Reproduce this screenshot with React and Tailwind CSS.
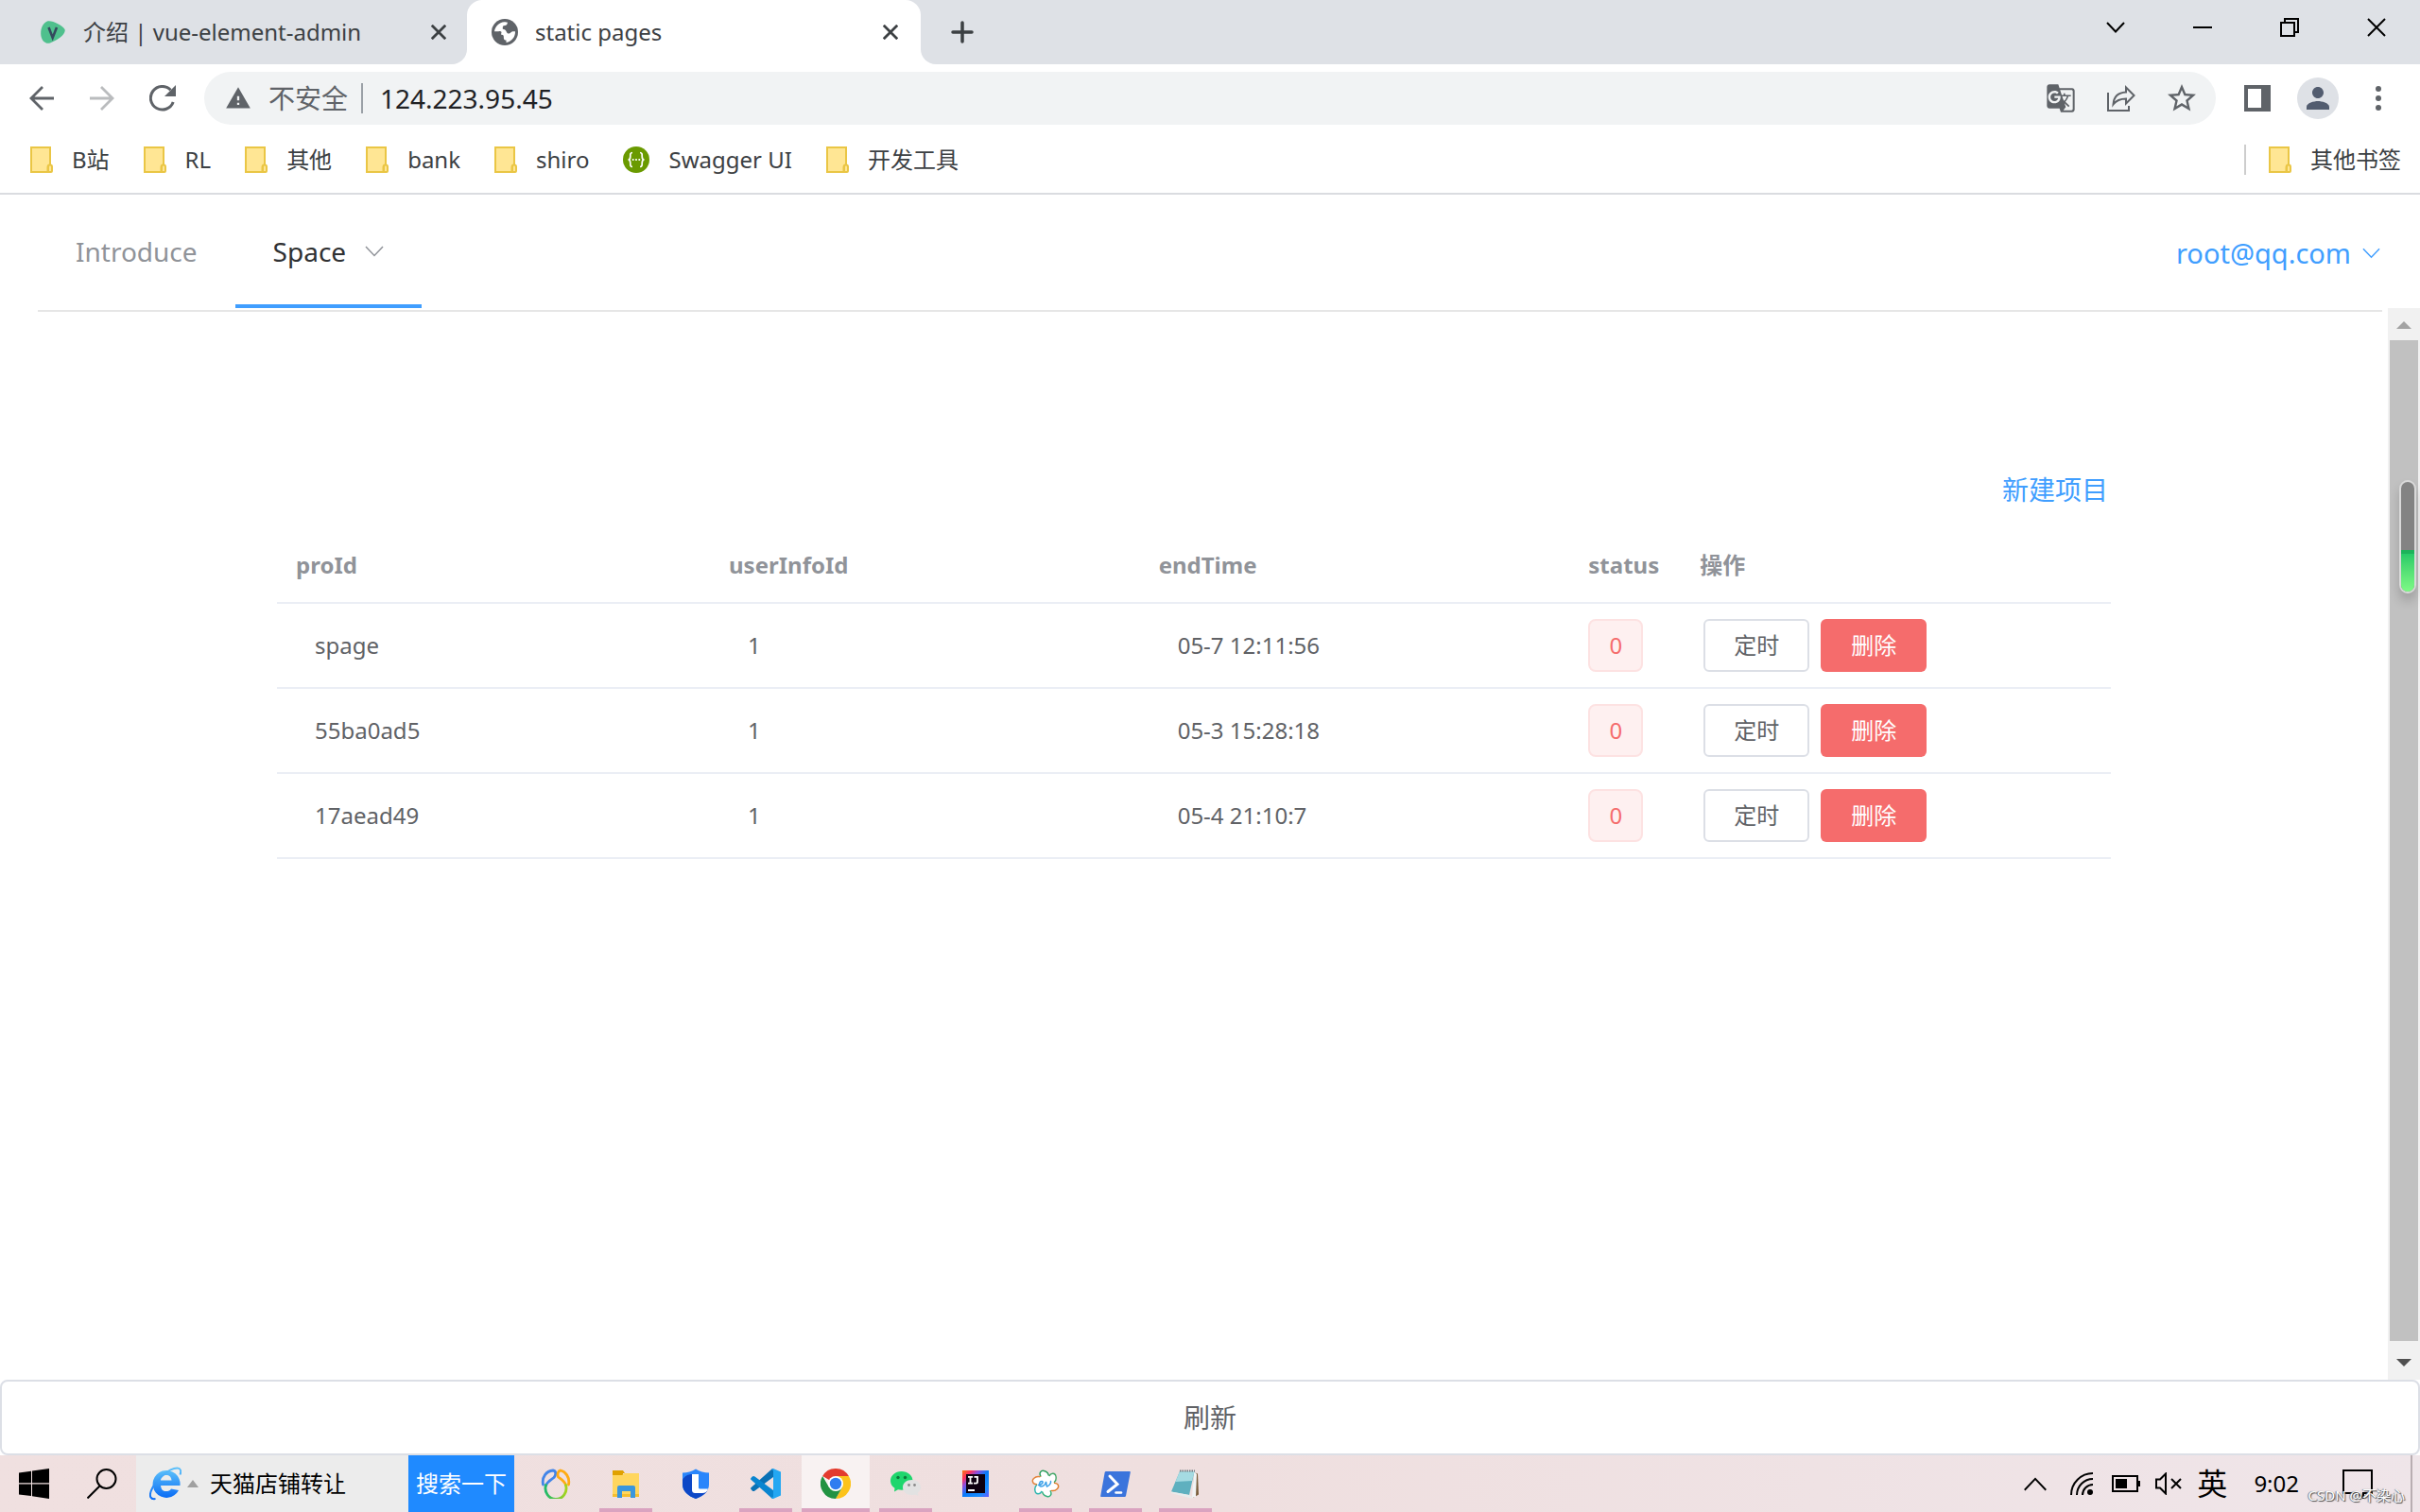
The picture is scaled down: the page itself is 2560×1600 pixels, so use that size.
import React from "react";
import {
  MdGTranslate,
  MdWarning,
  MdStarOutline,
  MdPerson,
} from "react-icons/md";

const rows = [
  { id: "spage", user: "1", end: "05-7 12:11:56", status: "0" },
  { id: "55ba0ad5", user: "1", end: "05-3 15:28:18", status: "0" },
  { id: "17aead49", user: "1", end: "05-4 21:10:7", status: "0" },
];

const bookmarks = ["B站", "RL", "其他", "bank", "shiro", "Swagger UI", "开发工具"];

function Chevron({ className, width = 2, up = false }) {
  return (
    <svg viewBox="0 0 20 12" className={className} fill="none" stroke="currentColor" strokeWidth={width} aria-hidden="true">
      <path d={up ? "M1 11 10 1.5 19 11" : "M1 1l9 9.5L19 1"} />
    </svg>
  );
}

function CloseX({ className, width }) {
  return (
    <svg viewBox="0 0 20 20" className={className} fill="none" stroke="currentColor" strokeWidth={width} aria-hidden="true">
      <path d="M1 1l18 18M19 1 1 19" />
    </svg>
  );
}

function Folder() {
  return (
    <svg viewBox="0 0 24 28" className="h-7 w-6 shrink-0" aria-hidden="true">
      <path d="M1 1h20v18.5a2.5 2.5 0 0 0-2.5 2.500V27H1z" fill="#ffe694" stroke="#eac645" strokeWidth="2" />
      <path d="M19 27v-5.500a2 2 0 0 1 4 0V26a1 1 0 0 1-1 1z" fill="#ffe694" stroke="#eac645" strokeWidth="2" />
    </svg>
  );
}

function Swagger() {
  return (
    <svg viewBox="0 0 28 28" className="size-7 shrink-0" aria-hidden="true">
      <circle cx="14" cy="14" r="14" fill="#6a9a00" />
      <path d="M10 6.500C7.500 6.500 7.800 8.500 7.800 10.500S7.300 14 5.500 14c1.800 0 2.300 1.500 2.300 3.500s-.3 4 2.200 4M18 6.500c2.500 0 2.200 2 2.200 4s.5 3.500 2.300 3.500c-1.800 0-2.300 1.500-2.300 3.500s.3 4-2.200 4" fill="none" stroke="#fff" strokeWidth="1.700" />
      <circle cx="10.700" cy="14" r="1.100" fill="#fff" />
      <circle cx="14" cy="14" r="1.100" fill="#fff" />
      <circle cx="17.300" cy="14" r="1.100" fill="#fff" />
    </svg>
  );
}

function TabStrip() {
  return (
    <div className="flex h-[68px] items-stretch bg-[#dee1e6] text-[#3c4043]">
      <div className="flex w-[494px] items-center pr-5 pl-[42px]">
        <svg viewBox="0 0 28 28" className="size-7 shrink-0" aria-hidden="true">
          <path d="M8 2.500C12 .8 24 6.500 26.500 11c2 5-8 12-15.500 14.500C6 27 1.500 23 1.200 16 1 9 4 4 8 2.500z" fill="#4fc08d" />
          <path d="M9.500 9l4.200 11L18 9" fill="none" stroke="#34495e" strokeWidth="2.600" />
        </svg>
        <span className="ml-[18px] flex-1 text-2xl whitespace-nowrap">介绍 | vue-element-admin</span>
        <button className="flex size-5 items-center justify-center" aria-label="关闭"><CloseX className="size-4" width="3.500" /></button>
      </div>
      <div className="relative flex w-[480px] items-center rounded-t-2xl bg-white pr-[22px] pl-[26px]">
        <span className="absolute bottom-0 -left-4 size-4 bg-white"><span className="block size-full rounded-br-2xl bg-[#dee1e6]" /></span>
        <span className="absolute -right-4 bottom-0 size-4 bg-white"><span className="block size-full rounded-bl-2xl bg-[#dee1e6]" /></span>
        <svg viewBox="0 0 28 28" className="size-7 shrink-0" aria-hidden="true">
          <circle cx="14" cy="14" r="14" fill="#5f6368" />
          <path d="M3 13.200C3.500 8.300 8 3.500 13.500 3.200c1 0 3 .2 3.300.5C17 5.500 15.800 6.800 14 7c-1.600 0-2.200.8-2.200 2.200v1.600c1.400.2 2.600.6 3.400 1.600.8 1.200.9 2.600 2.200 3 2.400.8 2.800-2 5-2.200H25c.3 5.500-3.600 10.800-9.500 11.700v-2.400c-3.500-.3-2.300-3-2.800-4.600-.3-1-1.400-1.100-2.500-1.200-.4-1.200.6-1.800.2-2.900-.5-1-2-.6-3-.6z" fill="#fff" />
        </svg>
        <span className="ml-[18px] flex-1 text-2xl whitespace-nowrap">static pages</span>
        <button className="flex size-5 items-center justify-center" aria-label="关闭"><CloseX className="size-4" width="3.500" /></button>
      </div>
      <button className="ml-8 flex w-6 items-center" aria-label="新标签页">
        <svg viewBox="0 0 24 24" className="size-6" stroke="currentColor" strokeWidth="3.500" strokeLinecap="round" aria-hidden="true"><path d="M12 2v20M2 12h20" /></svg>
      </button>
      <div className="ml-auto flex h-[58px] text-black">
        <button className="flex w-[92px] items-center justify-center" aria-label="搜索标签页"><Chevron className="h-3 w-5" /></button>
        <button className="flex w-[92px] items-center justify-center" aria-label="最小化"><span className="h-0.5 w-5 bg-black" /></button>
        <button className="flex w-[92px] items-center justify-center" aria-label="还原">
          <svg viewBox="0 0 20 20" className="size-5" fill="none" stroke="currentColor" strokeWidth="2" aria-hidden="true"><path d="M1 5h14v14H1zM5 5V1h14v14h-4" /></svg>
        </button>
        <button className="flex w-[92px] items-center justify-center" aria-label="关闭窗口"><CloseX className="size-5" width="2" /></button>
      </div>
    </div>
  );
}

const toolButton = "flex h-14 w-16 shrink-0 items-center justify-center";

function Toolbar() {
  return (
    <div className="flex items-center bg-white px-3 pt-2 text-[#5f6368]">
      <button className={toolButton} aria-label="后退">
        <svg viewBox="0 0 28 28" className="size-7" fill="none" stroke="currentColor" strokeWidth="2.800" aria-hidden="true"><path d="M27 14H3M15 2 3 14l12 12" /></svg>
      </button>
      <button className={toolButton + " text-[#babcbe]"} aria-label="前进">
        <svg viewBox="0 0 28 28" className="size-7" fill="none" stroke="currentColor" strokeWidth="2.800" aria-hidden="true"><path d="M1 14h24M13 2l12 12-12 12" /></svg>
      </button>
      <button className={toolButton} aria-label="重新加载">
        <svg viewBox="0 0 28 28" className="size-7" aria-hidden="true">
          <path d="M25.200 18A12.300 12.300 0 1 1 22.500 5.200" fill="none" stroke="currentColor" strokeWidth="3" />
          <path d="M28 0v12H16z" fill="currentColor" />
        </svg>
      </button>
      <div className="mx-3 flex h-14 flex-1 items-center rounded-full bg-[#f1f3f4] pr-1 pl-[22px]">
        <MdWarning className="size-7" />
        <span className="ml-[18px] text-[28px] leading-8">不安全</span>
        <span className="ml-[14px] h-8 w-0.5 bg-[#9aa0a6]" />
        <input aria-label="地址" defaultValue="124.223.95.45" className="ml-[18px] min-w-0 flex-1 bg-transparent text-[28px] text-[#202124] outline-none" />
        <button className={toolButton} aria-label="翻译"><MdGTranslate className="size-8" /></button>
        <button className={toolButton} aria-label="分享">
          <svg viewBox="0 0 30 28" className="h-7 w-[30px]" fill="none" stroke="currentColor" strokeWidth="2" aria-hidden="true">
            <path d="M1 8v19h22v-5" />
            <path d="M20 2.500v5C11 8 7 13 6.500 20.500 9.500 16.500 13 14.500 20 14.500v5L28.500 11z" strokeLinejoin="miter" />
          </svg>
        </button>
        <button className={toolButton} aria-label="收藏"><MdStarOutline className="size-9" /></button>
      </div>
      <button className={toolButton} aria-label="侧边栏"><span className="h-7 w-7 border-4 border-r-10 border-[#5f6368] bg-white" /></button>
      <button className={toolButton} aria-label="用户"><span className="flex size-11 items-center justify-center rounded-full bg-[#dee1e6] text-[#525c6f]"><MdPerson className="size-9" /></span></button>
      <button className={toolButton} aria-label="更多">
        <span className="flex flex-col gap-1"><i className="size-1.5 rounded-full bg-current" /><i className="size-1.5 rounded-full bg-current" /><i className="size-1.5 rounded-full bg-current" /></span>
      </button>
    </div>
  );
}

function Bookmarks() {
  return (
    <div className="flex h-[74px] items-center gap-9 border-b-2 border-[#dadce0] bg-white pt-0.5 pr-5 pl-8 text-2xl text-[#3c4043]">
      {bookmarks.map((name) => (
        <a key={name} href="#" className="flex items-center gap-5">
          {name === "Swagger UI" ? <Swagger /> : <Folder />}
          {name}
        </a>
      ))}
      <a href="#" className="ml-auto flex items-center gap-5">
        <span className="mr-1 h-8 w-0.5 bg-[#cdcdcd]" />
        <Folder />
        其他书签
      </a>
    </div>
  );
}

function AppHeader() {
  return (
    <header className="h-[120px]">
      <nav className="mx-10 flex h-[124px] justify-between border-b-2 border-[#e6e6e6] text-[28px]">
        <div className="flex h-[120px]">
          <a href="#" className="flex items-center border-b-4 border-transparent px-10 pt-1 text-[#909399]">Introduce</a>
          <a href="#" className="flex items-center gap-5 border-b-4 border-[#409eff] px-10 pt-1 text-[#303133]">
            Space
            <Chevron className="h-3 w-5 text-[#909399]" width="1.500" />
          </a>
        </div>
        <button className="flex h-[124px] items-center gap-3 pr-0.5 text-[29px] text-[#409eff]">
          root@qq.com
          <Chevron className="h-3 w-[19px]" width="1.500" />
        </button>
      </nav>
    </header>
  );
}

function ProjectTable() {
  return (
    <table className="w-full table-fixed text-left text-2xl text-[#606266]">
      <colgroup>
        <col className="w-[458px]" /><col /><col /><col className="w-[118px]" /><col />
      </colgroup>
      <thead>
        <tr className="h-20 border-b-2 border-[#ebeef5] text-[#909399]">
          {["proId", "userInfoId", "endTime", "status", "操作"].map((h) => (
            <th key={h} scope="col" className="pl-5 font-bold">{h}</th>
          ))}
        </tr>
      </thead>
      <tbody>
        {rows.map((r) => (
          <tr key={r.id} className="h-[90px] border-b-2 border-[#ebeef5]">
            <td className="pl-10">{r.id}</td>
            <td className="pl-10">{r.user}</td>
            <td className="pl-10">{r.end}</td>
            <td className="pl-5">
              <span className="flex h-14 w-[58px] items-center justify-center rounded-lg border-2 border-[#fde2e2] bg-[#fef0f0] text-[#f56c6c]">{r.status}</span>
            </td>
            <td className="pl-6">
              <div className="flex gap-3">
                <button className="h-14 w-28 rounded-md border-2 border-[#dcdfe6] bg-white">定时</button>
                <button className="h-14 w-28 rounded-md bg-[#f56c6c] text-white">删除</button>
              </div>
            </td>
          </tr>
        ))}
      </tbody>
    </table>
  );
}

function Scrollbar() {
  return (
    <div className="relative flex w-[34px] shrink-0 flex-col items-center bg-[#f1f1f1]">
      <button className="flex h-[34px] items-center justify-center" aria-label="向上滚动">
        <svg viewBox="0 0 16 8" className="mt-0.5 h-2 w-4" aria-hidden="true"><path d="M8 0l8 8H0z" fill="#a3a3a3" /></svg>
      </button>
      <div className="w-[30px] flex-1 bg-[#c1c1c1]" />
      <button className="flex h-[41px] items-center justify-center" aria-label="向下滚动">
        <svg viewBox="0 0 16 8" className="mt-1 h-2 w-4" aria-hidden="true"><path d="M0 0h16L8 8z" fill="#505050" /></svg>
      </button>
      <div className="absolute top-[182px] right-1 flex h-[120px] w-[18px] flex-col overflow-hidden rounded-full border-2 border-[#d9d9d9] bg-[#838383] shadow-[0_8px_12px_rgba(0,0,0,0.18)]">
        <div className="mt-auto h-11 border-t-4 border-[#1db35a] bg-linear-to-b from-[#26cb68] to-[#7dfa86]" />
      </div>
    </div>
  );
}

function Explorer() {
  return (
    <svg viewBox="0 0 32 32" className="size-8" aria-hidden="true">
      <path d="M2 2h11l2 3h-2v4H2z" fill="#e0a100" />
      <path d="M2 7h10l3-2h15v25H2z" fill="#ffd65e" />
      <path d="M2 27h28v3H2z" fill="#f6bf2f" />
      <path d="M7 31V20q0-2 2-2h15q2 0 2 2v11h-5v-7h-9v7z" fill="#3a96dd" />
    </svg>
  );
}

function Swirl() {
  return (
    <svg viewBox="0 0 32 32" className="size-8" fill="none" strokeWidth="2.800" strokeLinecap="round" aria-hidden="true">
      <defs>
        <linearGradient id="sw1" x1="0" y1="0" x2="1" y2="0"><stop offset="0" stopColor="#1fb96b" /><stop offset="1" stopColor="#a5d41d" /></linearGradient>
      </defs>
      <path d="M2.500 17C1 9 6 2.500 13 2c3.500.5 3.500 4.500 1 7.500C11 12 7 13.500 5.500 18" stroke="#4285e8" />
      <path d="M29.500 17C31 9 26 3 21 2c-3 .5-3.500 4-2.500 7 2.500 2 7 4.500 8 8.500" stroke="#ffab12" />
      <path d="M5.500 17.500A11 11.500 0 1 0 26.500 17.500" stroke="url(#sw1)" />
    </svg>
  );
}

function Shield() {
  return (
    <svg viewBox="0 0 32 32" className="size-8" aria-hidden="true">
      <path d="M16 .5C20 3 25 4.500 30 4.500V17c0 7-6 12-14 15C8 29 2 24 2 17V4.500C7 4.500 12 3 16 .5z" fill="#2a86fb" />
      <path d="M2 12c2-4 6-6 10-6v16c0 3 3 3 16 2-3 4-7 6.300-12 8C8 29 2 24 2 17z" fill="#0d47c6" />
      <path d="M12 6h7v13c0 2 0 2.500 2 2.500h8c-1 3-3 4.500-6 4.500h-7c-3 0-4-1-4-4z" fill="#fff" />
    </svg>
  );
}

function VsCode() {
  return (
    <svg viewBox="0 0 32 32" className="size-8" aria-hidden="true">
      <path d="M24 0v9L4.500 23.500Q3 24.500 1.800 23.500L.5 22Q-.5 21 .7 20L22.500.5z" fill="#0a71b5" />
      <path d="M24 32v-9L4.500 8.500Q3 7.500 1.800 8.500L.5 10Q-.5 11 .7 12L22.500 31.500z" fill="#0a85d0" />
      <path d="M24 0l8 3.500v25L24 32q-1 0-2-1l2-1V2l-2-1q1-1 2-1z" fill="#24a7f2" />
    </svg>
  );
}

function Chrome() {
  return (
    <svg viewBox="0 0 32 32" className="size-8" aria-hidden="true">
      <path d="M16 16 2.140 8A16 16 0 0 1 29.860 8z" fill="#e33b2e" />
      <path d="M16 8h13.860A16 16 0 0 1 16 32l6.930-12z" fill="#fcc31b" />
      <path d="M2.140 8A16 16 0 0 0 16 32l6.930-12L16 16l-6.930 4z" fill="#229342" />
      <circle cx="16" cy="16" r="8" fill="#fff" />
      <circle cx="16" cy="16" r="6.200" fill="#2f7df0" />
    </svg>
  );
}

function WeChat() {
  return (
    <svg viewBox="0 0 32 32" className="size-8" aria-hidden="true">
      <path d="M11.500 3C5 3 0 7.500 0 13c0 3.300 1.700 6 4.500 7.800L4 24.500l4-2.200c8 2 15.500-2.500 15.500-9.300C23.500 7.500 18.500 3 11.500 3z" fill="#1fd66d" />
      <circle cx="8" cy="9.500" r="1.700" fill="#0b7a3a" /><circle cx="15.500" cy="9.500" r="1.700" fill="#0b7a3a" />
      <path d="M22.500 12c-5.500 0-9.500 3.500-9.500 8s4 8 9.500 8c1.500 0 2.500-.2 3.700-.6l3.300 1.600-.7-3.200c2-1.500 3.200-3.500 3.200-5.800 0-4.500-4-8-9.500-8z" fill="#e2e2e2" />
      <circle cx="19.500" cy="17.500" r="1.400" fill="#8a8a8a" /><circle cx="25.500" cy="17.500" r="1.400" fill="#8a8a8a" />
    </svg>
  );
}

function Intellij() {
  return (
    <span className="flex size-7 items-center justify-center bg-[linear-gradient(135deg,#f97a12_0%,#fe315d_18%,#8a4fe0_32%,#087cfa_50%,#1a8dff_80%,#6b57ff_100%)]">
      <svg viewBox="0 0 20 20" className="size-5" aria-hidden="true">
        <rect width="20" height="20" fill="#0d0010" />
        <path d="M2 2.900h5M2 9.600h5M4.500 2.900v6.700M8.500 2.900h3.500V8q0 1.600-1.600 1.600H8" fill="none" stroke="#fff" strokeWidth="1.800" />
        <path d="M2 17h7" stroke="#fff" strokeWidth="2" />
      </svg>
    </span>
  );
}

const petals = [
  { a: 0, c: "#2a9d5c" }, { a: 60, c: "#45a86a" }, { a: 120, c: "#e07b2b" },
  { a: 180, c: "#36b37e" }, { a: 240, c: "#2fb6b0" }, { a: 300, c: "#e3823a" },
];

function Ev() {
  return (
    <svg viewBox="0 0 32 32" className="size-8" aria-hidden="true">
      {petals.map((p) => (
        <path key={p.a} d="M11 8.500C8.500 4.500 11.500 1.500 14.500 2.500 18 3.500 19.500 6 19.500 9" fill="#fff" stroke={p.c} strokeWidth="1.400" strokeLinecap="round" transform={`rotate(${p.a} 16 16)`} />
      ))}
      <circle cx="16" cy="16" r="9" fill="#fff" />
      <path d="M8.500 17.500c4 0 6-4 3.500-4s-4 5.500-.5 5.500c2.500 0 4.500-2.500 5-5 .5 2 .5 4 1 5 3-1 4.500-4 4-5.500" fill="none" stroke="#3aa0e8" strokeWidth="1.500" strokeLinecap="round" />
    </svg>
  );
}

function PowerShell() {
  return (
    <svg viewBox="0 0 32 32" className="size-8" aria-hidden="true">
      <path d="M6 4h25q1 0 .8 1L27 30q-.3 1-1.300 1H1q-1 0-.8-1L4.700 5Q5 4 6 4z" transform="translate(0 -1)" fill="#3b74dc" />
      <path d="M10 8l8 8.500L8 24.500" fill="none" stroke="#fff" strokeWidth="3" strokeLinecap="round" />
      <path d="M16.500 25.500H22" stroke="#fff" strokeWidth="2.600" strokeLinecap="round" />
    </svg>
  );
}

function Notepad() {
  return (
    <svg viewBox="0 0 32 32" className="size-8" aria-hidden="true">
      <path d="M25 4l4 1.500 1 22-6 3.500z" fill="#7a5e3c" />
      <path d="M25 3l3 3-1 24-4 1z" fill="#f2f4f5" />
      <path d="M10 3h15.500L20 28 1 24.500z" fill="#5fb0bf" />
      <path d="M10 3h15.500L23 13 5.500 14z" fill="#a5dbe2" />
      <path d="M1 24.500L20 28l4 3-2 .5L1 26z" fill="#e8ecec" />
      <path d="M10 2.500h16" stroke="#6f7b80" strokeWidth="2" strokeDasharray="1.500 1" />
    </svg>
  );
}

const apps = [
  { name: "桌面助手", icon: Swirl, bar: false },
  { name: "文件资源管理器", icon: Explorer, bar: true },
  { name: "联想电脑管家", icon: Shield, bar: false },
  { name: "Visual Studio Code", icon: VsCode, bar: true },
  { name: "Chrome", icon: Chrome, bar: true, active: true },
  { name: "微信", icon: WeChat, bar: true },
  { name: "IntelliJ IDEA", icon: Intellij, bar: false },
  { name: "EV", icon: Ev, bar: true },
  { name: "PowerShell", icon: PowerShell, bar: true },
  { name: "记事本", icon: Notepad, bar: true },
];

function Taskbar() {
  return (
    <footer className="relative flex h-[60px] shrink-0 items-stretch bg-linear-to-r from-[#f0e0e0] via-[#efdfdf] to-[#efe5e9] text-black">
      <button className="flex w-[72px] items-center justify-center" aria-label="开始">
        <svg viewBox="0 0 32 32" className="size-8" aria-hidden="true"><path d="M0 4.500l13-1.800v12.600H0zM14 2.500 32 0v15.300H14zM0 16.500h13v12.600L0 27.500zM14 16.500h18V32l-18-2.700z" /></svg>
      </button>
      <button className="flex w-[72px] items-center justify-center" aria-label="搜索">
        <svg viewBox="0 0 32 32" className="size-8" fill="none" stroke="currentColor" strokeWidth="2" aria-hidden="true"><circle cx="20.500" cy="11" r="10" /><path d="M13.500 18.500.5 31.500" /></svg>
      </button>
      <div className="flex w-[288px] items-center bg-[#ececec] pl-3.5">
        <svg viewBox="0 0 34 36" className="h-9 w-[34px] shrink-0" aria-hidden="true">
          <defs><linearGradient id="ie" x1="0" y1="0" x2="0" y2="1"><stop offset="0" stopColor="#5cc0fa" /><stop offset="1" stopColor="#0a6cf5" /></linearGradient></defs>
          <path d="M31 25A14.500 14.500 0 1 1 32.500 20H12c.5 4.500 2.500 6 5.500 6 2.500 0 4.500-.5 5.500-2.500zM12 14.500h11.500c-.5-4-2.500-5.500-5.500-5.500s-5.500 1.500-6 5.500z" fill="url(#ie)" fillRule="evenodd" />
          <path d="M32.500 8.500c1.500-4 .5-7-3-7-4 0-10 3-15 7.500C5 17-1 28 1.500 32.500c1 2 3 1.800 5 1.500" fill="none" stroke="url(#ie)" strokeWidth="2" />
        </svg>
        <svg viewBox="0 0 12 8" className="mr-3 ml-1.5 h-2 w-3 shrink-0" aria-hidden="true"><path d="M6 0l6 8H0z" fill="#a0a0a0" /></svg>
        <input aria-label="搜索内容" defaultValue="天猫店铺转让" className="min-w-0 flex-1 bg-transparent text-2xl outline-none" />
      </div>
      <button className="mr-[7px] w-28 bg-[#1f8aff] text-2xl whitespace-nowrap text-white">搜索一下</button>
      {apps.map(({ name, icon: Icon, bar, active }) => (
        <button key={name} aria-label={name} className={active ? "relative mx-px flex w-[72px] items-center justify-center bg-[#f8f2f2]" : "relative mx-[9px] flex w-14 items-center justify-center"}>
          <Icon />
          {bar && <span className="absolute inset-x-0 bottom-0 h-1 bg-[#daa3c0]" />}
        </button>
      ))}
      <div className="ml-auto flex items-center">
        <Chevron up className="h-[15px] w-[26px]" width="1.500" />
        <svg viewBox="0 0 24 24" className="ml-6 size-6" fill="none" stroke="currentColor" strokeWidth="2" aria-hidden="true">
          <path d="M1 24A23 23 0 0 1 24 1M7 24A17 17 0 0 1 24 7M13 24a11 11 0 0 1 11-11" /><circle cx="21" cy="21" r="3" fill="currentColor" stroke="none" />
        </svg>
        <svg viewBox="0 0 30 18" className="ml-5 h-[18px] w-[30px]" aria-hidden="true"><path d="M1 1h26v16H1z" fill="none" stroke="currentColor" strokeWidth="2" /><path d="M4 4h12v10H4zM28 6h2v6h-2z" /></svg>
        <svg viewBox="0 0 28 24" className="ml-4 h-6 w-7" fill="none" stroke="currentColor" strokeWidth="2" aria-hidden="true"><path d="M1 7.500h4L11 1.500v21l-6-6H1zM17 7l10 10M27 7 17 17" /></svg>
        <span className="ml-4 text-[32px] leading-10">英</span>
        <span className="ml-7 text-2xl">9:02</span>
        <svg viewBox="0 0 32 32" className="mr-10 ml-[46px] size-8" fill="none" stroke="currentColor" strokeWidth="2" aria-hidden="true"><path d="M1 2h30v24h-9v5l-6-5H1z" /></svg>
        <span className="mr-2 h-[60px] w-0.5 bg-[#b9aeb2]" />
      </div>
      <span className="absolute right-4 bottom-2 text-[15px] leading-5 whitespace-nowrap text-white [text-shadow:1px_1px_1px_#444,-1px_0_1px_#777]">CSDN @不染心</span>
    </footer>
  );
}

export default function App() {
  return (
    <div className="flex h-screen flex-col overflow-hidden bg-white font-['Noto_Sans','Noto_Sans_CJK_SC',sans-serif]">
      <TabStrip />
      <Toolbar />
      <Bookmarks />
      <AppHeader />
      <div className="flex min-h-0 flex-1">
        <main className="flex-1 px-[293px] pt-[168px]">
          <div className="flex justify-end pr-[3px]">
            <button className="h-12 text-[28px] text-[#409eff]">新建项目</button>
          </div>
          <div className="mt-4"><ProjectTable /></div>
        </main>
        <Scrollbar />
      </div>
      <button className="h-20 shrink-0 rounded-lg border-2 border-[#dcdfe6] text-[28px] text-[#606266]">刷新</button>
      <Taskbar />
    </div>
  );
}
